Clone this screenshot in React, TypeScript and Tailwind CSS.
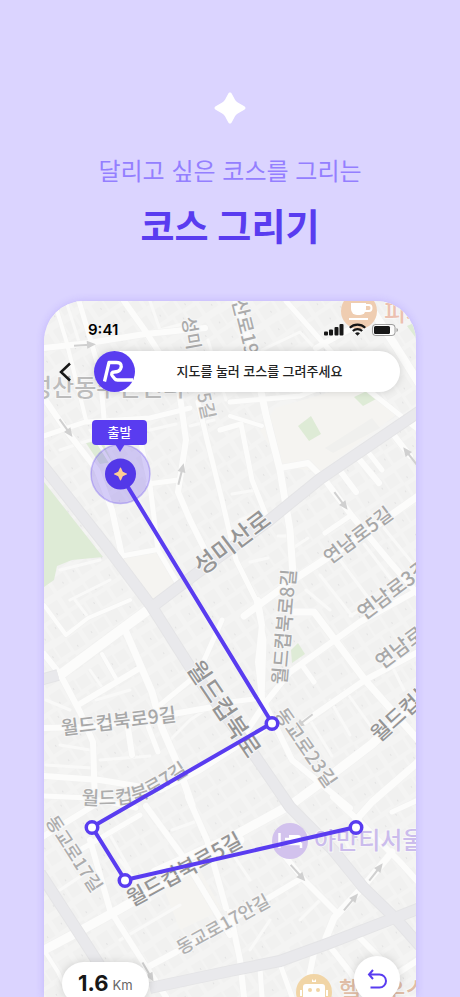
const SANS = "font-['Inter','Noto_Sans_CJK_KR',sans-serif]";

// white side streets
const streets = [
  { d: "M44 348 L89 343 L145 334 L205 328", w: 6 },
  { d: "M44 436 L85 422 L150 418 L190 408", w: 5 },
  { d: "M54 301 L66 340 L86 420", w: 4 },
  { d: "M79 301 L100 372 L104 418", w: 5 },
  { d: "M124 301 L146 332 L178 382 L186 440 L178 492 L190 520 L205 550", w: 6 },
  { d: "M44 398 L66 430 L97 470 L112 510 L122 556", w: 6 },
  { d: "M136 420 L150 485 L158 550 L178 584", w: 5 },
  { d: "M116 557 L155 550", w: 5 },
  { d: "M148 484 L178 480", w: 5 },
  { d: "M198 402 L207 440 L222 500 L236 560 L256 600 L264 640 L262 700", w: 5 },
  { d: "M220 430 L241 424 L252 480 L268 520", w: 5 },
  { d: "M236 301 L252 350 L266 415 L280 470 L290 530 L293 575", w: 7 },
  { d: "M230 416 L262 426", w: 4 },
  { d: "M286 301 L325 345 L362 385 L416 428", w: 5 },
  { d: "M366 301 L395 345 L420 385", w: 8 },
  { d: "M316 348 L352 328 L372 315", w: 6 },
  { d: "M230 402 L300 396 L340 380", w: 5 },
  { d: "M280 468 L308 463 L325 480 L352 516 L390 562 L430 608", w: 6 },
  { d: "M341 472 L356 492", w: 6 },
  { d: "M359 459 L379 483", w: 6 },
  { d: "M368 452 L382 470", w: 5 },
  { d: "M393 434 L410 456", w: 6 },
  { d: "M411 420 L420 430", w: 6 },
  { d: "M418 496 L370 530 L293 580 L244 616", w: 7 },
  { d: "M325 533 L350 516", w: 5 },
  { d: "M293 612 L314 612 L335 640 L365 680 L420 742", w: 7 },
  { d: "M418 590 L360 622 L290 672 L266 702 L242 738", w: 6 },
  { d: "M418 652 L365 680 L300 725", w: 6 },
  { d: "M258 600 L262 625 L258 662 L262 698 L292 760 L350 808", w: 6 },
  { d: "M418 700 L372 744 L330 776 L292 804 L230 838 L155 872", w: 9 },
  { d: "M418 762 L372 802 L356 820", w: 7 },
  { d: "M302 665 L314 682", w: 5 },
  { d: "M230 702 L262 698", w: 5 },
  { d: "M152 607 L118 632 L60 675", w: 10 },
  { d: "M126 632 L152 692 L162 728 L178 765 L192 805", w: 7 },
  { d: "M44 654 L60 674 L80 712 L93 742 L95 805", w: 6 },
  { d: "M78 705 L140 668", w: 6 },
  { d: "M44 728 L90 727 L150 718 L230 704", w: 6 },
  { d: "M160 705 L198 674 L222 620", w: 5 },
  { d: "M128 728 L132 755", w: 6 },
  { d: "M148 726 L158 752", w: 5 },
  { d: "M44 776 L100 780 L160 790 L200 770 L262 730", w: 6 },
  { d: "M44 796 L90 798 L136 808", w: 5 },
  { d: "M44 605 L66 635 L88 618 L130 600", w: 4 },
  { d: "M102 654 L118 682", w: 4 },
  { d: "M146 806 L184 858 L230 935", w: 6 },
  { d: "M188 797 L207 840 L226 908", w: 6 },
  { d: "M44 950 L78 932 L118 910 L160 886 L240 840", w: 9 },
  { d: "M90 840 L110 910 L145 965 L166 997", w: 6 },
  { d: "M44 836 L96 804", w: 6 },
  { d: "M80 850 L140 815", w: 5 },
  { d: "M44 950 L58 972 L70 997", w: 4 },
  { d: "M146 968 L176 952 L245 912 L302 878", w: 6 },
  { d: "M280 850 L304 880 L338 914", w: 6 },
  { d: "M326 938 L334 918 L362 888 L392 852", w: 7 },
  { d: "M333 797 L360 822 L400 862 L420 884", w: 6 },
  { d: "M418 800 L392 812", w: 5 },
  { d: "M230 912 L240 960 L244 997", w: 6 },
  { d: "M280 964 L292 997", w: 5 },
  { d: "M260 968 L262 997", w: 5 },
  { d: "M315 948 L308 982", w: 6 },
  { d: "M328 944 L350 972 L366 997", w: 6 },
  { d: "M358 936 L380 958", w: 6 },
  { d: "M418 960 L395 975", w: 6 },
];

const lanes = [
  "M66 301 L80 345 M150 301 L160 330 L190 322 M208 340 L226 400 M262 350 L300 332 L318 352",
  "M150 430 L176 424 M190 426 L214 420 M232 494 L256 490 M240 520 L262 512",
  "M290 550 L308 538 M278 536 L292 536 M250 562 L268 558",
  "M340 560 L370 600 M364 544 L396 586 M384 528 L418 570 M320 575 L352 616 M306 590 L330 610",
  "M350 616 L392 592 M330 700 L350 735 M345 690 L372 728 M384 650 L404 690 M310 720 L332 756",
  "M75 600 L88 617 M96 700 L130 690 M46 700 L70 710 M90 670 L104 690",
  "M100 760 L150 756 M60 745 L90 750 M46 765 L92 768 M170 740 L190 720 L220 700",
  "M110 835 L130 870 M60 890 L90 870 M120 860 L150 900 M200 820 L172 830",
  "M120 940 L180 905 M250 880 L230 850 M250 950 L270 920 M300 920 L320 900 M340 830 L350 850",
  "M90 430 L115 470 M60 450 L90 440 M60 570 L100 560 M70 600 L110 580",
];

const mainRoads = [
  "M40 462 L107 547 L152 607 L190 667 L253 753 L290 807 L333 850 L363 887 L397 920 L420 946",
  "M420 411 L320 479 L267 522 L197 573 L152 607",
  "M40 680 L58 675",
  "M40 873 L77 930 L120 997",
  "M150 988 L230 971 L280 961 L327 944 L397 917 L420 908",
];

const arrows = [
  { x: 85, y: 345, r: -4 },
  { x: 66, y: 428, r: 54 },
  { x: 181, y: 474, r: -76 },
  { x: 341, y: 501, r: 53 },
  { x: 410, y: 456, r: -128 },
  { x: 304, y: 721, r: 142 },
  { x: 298, y: 873, r: 48 },
  { x: 351, y: 902, r: -50 },
  { x: 376, y: 872, r: -52 },
  { x: 148, y: 972, r: 60 },
];

const labels = [
  { text: "성산동주민센터", x: 30, y: 396, r: 0, size: 24, fill: "#bcbcbc" },
  { text: "성미", x: 182, y: 318, r: 80, size: 18, fill: "#ababab" },
  { text: "산로19길", x: 232, y: 301, r: 76, size: 19, fill: "#ababab" },
  { text: "5길", x: 197, y: 394, r: 78, size: 18, fill: "#b4b4b4" },
  { text: "성미산로", x: 202, y: 576, r: -37, size: 24, fill: "#959595" },
  { text: "연남로5길", x: 330, y: 565, r: -37, size: 19, fill: "#a8a8a8" },
  { text: "연남로3길", x: 364, y: 621, r: -37, size: 20, fill: "#a8a8a8" },
  { text: "연남로", x: 382, y: 670, r: -37, size: 20, fill: "#a8a8a8" },
  { text: "월드컵북로8길", x: 286, y: 685, r: -85, size: 19, fill: "#a8a8a8" },
  { text: "월드컵북로", x: 186, y: 668, r: 56, size: 24, fill: "#959595" },
  { text: "월드컵북로9길", x: 62, y: 735, r: -7, size: 19, fill: "#a8a8a8" },
  { text: "동교로23길", x: 274, y: 714, r: 55, size: 19, fill: "#adadad" },
  { text: "월드컵북로", x: 379, y: 743, r: -42, size: 21, fill: "#959595" },
  { text: "동교로17길", x: 45, y: 821, r: 57, size: 18, fill: "#adadad" },
  { text: "월드컵북로5길", x: 132, y: 907, r: -29, size: 21, fill: "#959595" },
  { text: "동교로17안길", x: 181, y: 955, r: -29, size: 18, fill: "#b0b0b0" },
];

const route = [
  { x: 120, y: 474 },
  { x: 272, y: 723 },
  { x: 92, y: 827 },
  { x: 125, y: 880 },
  { x: 356, y: 827 },
];

function CourseMap() {
  return (
    <svg
      viewBox="44 301 372 696"
      preserveAspectRatio="xMidYMin slice"
      className="absolute inset-0 h-full w-full font-['Noto_Sans_CJK_KR',sans-serif]"
      role="img"
      aria-label="코스 지도"
    >
      <defs>
        <pattern id="blocks" width="46" height="38" patternUnits="userSpaceOnUse" patternTransform="rotate(-33)">
          <path d="M2 2h11v14h-11z M15 3h12v12h-12z M30 2h13v15h-13z M2 20h15v13h-15z M20 19h9v15h-9z M32 21h12v12h-12z" fill="#f1f1f0" />
          <path d="M8 10h1 M35 14h1 M11 29h1 M26 25h1" stroke="#d6d6d6" strokeWidth="1" />
        </pattern>
      </defs>
      <rect x="44" y="301" width="372" height="696" fill="#f4f4f3" />
      <rect x="44" y="301" width="372" height="696" fill="url(#blocks)" />
      <path d="M260 430 L275 408 L355 385 L400 412 L320 472 L282 466z" fill="#f5f4f1" />
      <path d="M325 448 L372 418 L380 428 L333 453z" fill="#f0f0ee" />
      <path d="M112 556 L158 550 L180 578 L152 600z M160 880 L200 870 L222 910 L180 930z" fill="#f5f4f1" />
      <g fill="#deebd6">
        <path d="M44 482 L103 557 L72 560 L57 566 L54 580 L44 587z" />
        <path d="M298 426 L311 416 L321 434 L309 441z" />
        <path d="M354 397 L369 390 L378 398 L363 406z" />
        <path d="M86 443 L102 440 L112 462 L100 464z" />
        <path d="M291 650 L298 643 L305 654 L292 663z" />
        <path d="M407 326 L416 322 L416 338z" />
      </g>

      <g fill="none" stroke="#f9f9f8" strokeLinecap="round" strokeLinejoin="round">
        {lanes.map((d) => (
          <path key={d} d={d} strokeWidth="3" />
        ))}
      </g>
      <g fill="none" strokeLinecap="round" strokeLinejoin="round">
        {streets.map((s) => (
          <path key={s.d} d={s.d} stroke="#f1f1f0" strokeWidth={s.w + 1} />
        ))}
        {streets.map((s) => (
          <path key={s.d} d={s.d} stroke="#fcfcfb" strokeWidth={s.w} />
        ))}
      </g>
      <g fill="none" strokeLinejoin="round">
        {mainRoads.map((d) => (
          <path key={d} d={d} stroke="#e4e4e6" strokeWidth="12" />
        ))}
        {mainRoads.map((d) => (
          <path key={d} d={d} stroke="#e9e9ec" strokeWidth="10" />
        ))}
      </g>

      {arrows.map((a) => (
        <g key={`${a.x}-${a.y}`} transform={`translate(${a.x} ${a.y}) rotate(${a.r})`}>
          <path d="M-11 0H5" stroke="#d0d0d0" strokeWidth="2" />
          <path d="M2 -4L11 0L2 4z" fill="#d0d0d0" />
        </g>
      ))}

      <g fontWeight="500" stroke="#f7f7f7" strokeWidth="2" paintOrder="stroke">
        {labels.map((l) => (
          <text
            key={`${l.text}-${l.x}`}
            transform={`translate(${l.x} ${l.y}) rotate(${l.r})`}
            fontSize={l.size}
            fill={l.fill}
          >
            {l.text}
          </text>
        ))}
        {/* runs under the route line, bends slightly upwards */}
        <path id="street7" d="M81 804 Q128 808 152 795 T204 762" fill="none" stroke="none" />
        <text fontSize="19" fill="#adadad">
          <textPath href="#street7">월드컵북로7길</textPath>
        </text>
        <text x="384" y="321" fontSize="24" fill="#ecc0b0">피자</text>
        <text x="314" y="849" fontSize="24" fill="#cbbcec">아만티서울</text>
        <text x="339" y="999" fontSize="24" fill="#e0bda6">헬로우스마</text>
      </g>

      <circle cx="359" cy="311" r="18" fill="#efcdb1" />
      <path d="M351 303h15v6a6 6 0 0 1-6 6h-3a6 6 0 0 1-6-6z" fill="#fff" />
      <path d="M366 305h3a2.500 3 0 0 1 0 6h-4 M349 319h19" fill="none" stroke="#fff" strokeWidth="2" />
      <circle cx="290" cy="841" r="18" fill="#d2c2ed" />
      <path d="M279.500 833v15 M279.500 844h21.500v4 M285 839h4" fill="none" stroke="#fff" strokeWidth="2.500" />
      <path d="M289 835h9a3 3 0 0 1 3 3v5h-12z" fill="#fff" />
      <circle cx="314" cy="992" r="18" fill="#f1d5a6" />
      <path d="M306 984h16a3 3 0 0 1 3 3v10h-22v-10a3 3 0 0 1 3-3z M312 979l2 2 2-2v3h-4z M300 990h2v6h-2z M326 990h2v6h-2z" fill="#fff" />
      <circle cx="310" cy="990" r="2" fill="#f1d5a6" />
      <circle cx="318" cy="990" r="2" fill="#f1d5a6" />

      <circle cx="120.500" cy="474" r="29.500" fill="#5a3cee" fillOpacity="0.240" stroke="#5a3cee" strokeOpacity="0.300" strokeWidth="1.500" />
      <polyline
        points={route.map((p) => `${p.x},${p.y}`).join(" ")}
        fill="none"
        stroke="#593cf0"
        strokeWidth="4"
        strokeLinejoin="round"
      />
      {route.slice(1).map((p) => (
        <circle key={`${p.x}-${p.y}`} cx={p.x} cy={p.y + 0.5} r="5.750" fill="#fff" stroke="#593cf0" strokeWidth="3.500" />
      ))}
      <circle cx="120.500" cy="474" r="15.500" fill="#5338e8" />
      <path
        d="M120.500 467.500 Q121 467.500 121.300 468.500 L122.800 471.700 L126 473.200 Q127 473.500 127 474 Q127 474.500 126 474.800 L122.800 476.300 L121.300 479.500 Q121 480.500 120.500 480.500 Q120 480.500 119.700 479.500 L118.200 476.300 L115 474.800 Q114 474.500 114 474 Q114 473.500 115 473.200 L118.200 471.700 L119.700 468.500 Q120 467.500 120.500 467.500z"
        fill="#ffce93"
      />
      <path d="M115 444h10l-5 8z" fill="#593cf0" />
      <rect x="92" y="420" width="55" height="25" rx="4" fill="#593cf0" />
      <text x="119.500" y="437" textAnchor="middle" fontSize="13" fontWeight="500" fill="#fff">
        출발
      </text>
    </svg>
  );
}

function Sparkle() {
  return (
    <svg viewBox="-16 -16 32 32" className="size-8" fill="#fff" aria-hidden="true">
      <path d="M0 -15.500C.8 -15.500 1.400 -15 1.800 -14.200L5 -8.300Q6 -6.600 7.800 -5.600L14.300 -1.800Q15.500 -1.200 15.500 0Q15.500 1.200 14.300 1.800L7.800 5.600Q6 6.600 5 8.300L1.800 14.200C1.400 15 .8 15.500 0 15.500S-1.400 15 -1.800 14.200L-5 8.300Q-6 6.600 -7.800 5.600L-14.300 1.800Q-15.500 1.200 -15.500 0Q-15.500 -1.200 -14.300 -1.800L-7.800 -5.600Q-6 -6.600 -5 -8.300L-1.800 -14.200C-1.400 -15 -.8 -15.500 0 -15.500z" />
    </svg>
  );
}

function StatusBar() {
  return (
    <div className="flex items-center justify-between pt-5 pr-4 pl-11">
      <span className="text-[15px] leading-[18px] font-semibold text-black">9:41</span>
      <svg viewBox="0 0 76 14" className="h-3.5 w-19" aria-hidden="true">
        <g fill="#171717">
          <rect x="0" y="8.500" width="4" height="4" rx="1" />
          <rect x="5" y="6.500" width="4" height="6" rx="1" />
          <rect x="10.500" y="4" width="4" height="8.500" rx="1" />
          <rect x="15.500" y="1" width="4" height="11.500" rx="1" />
        </g>
        <g fill="none" stroke="#171717" strokeWidth="2.200">
          <path d="M25.800 4.800a11 11 0 0 1 15.400 0" />
          <path d="M28.800 8a7 7 0 0 1 9.400 0" />
        </g>
        <path d="M31 10.200a4 4 0 0 1 5 0L33.500 12.800z" fill="#171717" />
        <rect x="48.500" y="1.500" width="22.500" height="11" rx="3" fill="#fff" fillOpacity="0.600" stroke="#171717" strokeOpacity="0.400" />
        <rect x="50" y="3" width="16" height="8" rx="1.500" fill="#171717" />
        <path d="M72.500 5v4q1.500-.5 1.500-2t-1.500-2z" fill="#171717" fillOpacity="0.400" />
      </svg>
    </div>
  );
}

function RunLogo() {
  return (
    <svg viewBox="0 0 41 41" className="size-[41px] shrink-0" aria-hidden="true">
      <circle cx="20.500" cy="20.500" r="20.500" fill="#593cf0" />
      <path
        d="M10.500 30.500L15 11.500H22.500C27.500 11.500 28 15 26.500 18C25 20.800 22.500 21 20.500 21C17.500 21 17 23 18.500 25L20.500 27.500Q21.500 29 23.500 29H39"
        fill="none"
        stroke="#fff"
        strokeWidth="3.300"
        strokeLinejoin="round"
      />
    </svg>
  );
}

export default function App() {
  return (
    <main className={`flex h-screen flex-col overflow-hidden bg-[#dbd4ff] ${SANS}`}>
      <header className="flex flex-col items-center pt-[92px] text-center">
        <Sparkle />
        <p className="mt-[30px] text-[24px] leading-9 text-[#947fff]">달리고 싶은 코스를 그리는</p>
        <h1 className="mt-2 text-[37px] leading-[60px] font-bold text-[#593cf0]">코스 그리기</h1>
      </header>

      <section className="relative mx-11 mt-[43px] flex flex-1 flex-col overflow-hidden rounded-t-[40px] shadow-[0_0_8px_rgba(89,60,240,0.2)]">
        <CourseMap />
        <div className="relative flex flex-1 flex-col">
          <StatusBar />
          <div className="mt-3 flex items-center pr-4 pl-3">
            <button type="button" aria-label="뒤로" className="flex w-[38px] items-center">
              <svg viewBox="0 0 20 20" className="size-5" fill="none" stroke="#171717" strokeWidth="2.500" aria-hidden="true">
                <path d="M14 1.500L5 10L14 18.500" />
              </svg>
            </button>
            <div className="flex flex-1 items-center rounded-full bg-white shadow-[0_0_8px_rgba(0,0,0,0.15)]">
              <RunLogo />
              <p className="flex-1 pr-4 text-center text-[13px] font-medium text-[#222]">지도를 눌러 코스를 그려주세요</p>
            </div>
          </div>

          <div className="mt-auto -mb-2 flex items-end justify-between pr-4 pl-[18px]">
            <p className="flex h-[43px] items-center gap-1 rounded-full bg-white px-4 shadow-[0_0_8px_rgba(0,0,0,0.15)]">
              <span className="text-[22px] font-bold text-[#171717]">1.6</span>
              <span className="pt-1 text-[13px] text-[#666]">Km</span>
            </p>
            <button
              type="button"
              aria-label="되돌리기"
              className="mb-[3px] flex size-[46px] items-center justify-center rounded-full bg-white shadow-[0_0_8px_rgba(0,0,0,0.15)]"
            >
              <svg viewBox="0 0 20 20" className="size-5" fill="none" stroke="#593cf0" strokeWidth="2" aria-hidden="true">
                <path d="M6 1L2 5.500L6 10 M2 5.500H12.500a6.500 6.500 0 0 1 0 13H3.500" />
              </svg>
            </button>
          </div>
        </div>
      </section>
    </main>
  );
}
